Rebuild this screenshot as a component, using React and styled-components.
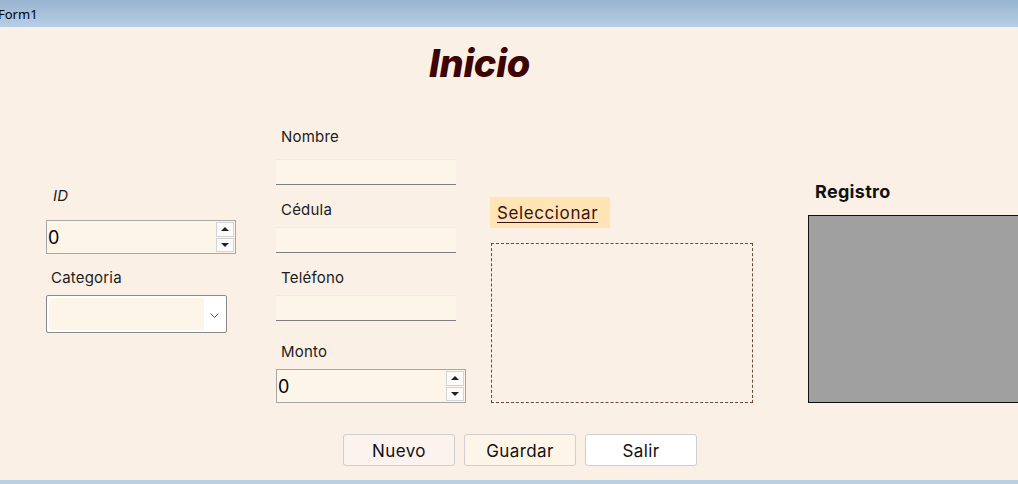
import React from 'react';
import styled, { createGlobalStyle } from 'styled-components';

const GlobalStyle = createGlobalStyle`
    html, body {
        margin: 0;
        padding: 0;
        background: #faf0e6;
        font-family: "Inter", "Noto Sans", sans-serif;
        overflow: hidden;
    }
`

const Window = styled.div`
    width: 1018px;
    height: 484px;
    display: flex;
    flex-direction: column;
    overflow: hidden;
`

const TitleBar = styled.div`
    height: 27px;
    flex-shrink: 0;
    background: linear-gradient(#99b4d1, #b6cfe7);
    display: flex;
    align-items: center;
    font-family: "Noto Sans", "Liberation Sans", sans-serif;
    font-size: 13px;
    color: #000;
    padding-left: 0;
    margin-left: -2px;
`

const Form = styled.div`
    height: 453px;
    flex-shrink: 0;
    background: #faf0e6;
    display: flex;
    flex-direction: column;
    overflow: hidden;
`

const BottomStrip = styled.div`
    flex: 1;
    background: #b9cfe4;
`

const Header = styled.div`
    padding: 15px 0 36px 429px;
`

const Title = styled.h1`
    margin: 0;
    height: 42px;
    line-height: 42px;
    font-size: 38px;
    font-weight: 800;
    font-style: italic;
    color: #3d0303;
    letter-spacing: -0.3px;
`

const Columns = styled.div`
    display: flex;
    align-items: flex-start;
`

const Column = styled.div`
    display: flex;
    flex-direction: column;
    width: ${(p) => p.width}px;
    margin-left: ${(p) => p.left}px;
    padding-top: ${(p) => p.top}px;
    flex-shrink: 0;
`

const Label = styled.div`
    height: 20px;
    line-height: 20px;
    font-size: 15px;
    color: #1c1c1c;
    padding-left: ${(p) => p.indent || 5}px;
    margin-top: ${(p) => p.gap || 0}px;
    font-style: ${(p) => p.italic ? 'italic' : 'normal'};
    letter-spacing: 0.2px;
`

const SpinBox = styled.div`
    display: flex;
    align-items: stretch;
    height: 34px;
    box-sizing: border-box;
    border: 1px solid #a7a7a7;
    background: #fdf5e8;
    margin-top: ${(p) => p.gap || 0}px;
`

const SpinValue = styled.div`
    flex: 1;
    display: flex;
    align-items: center;
    padding-left: 1px;
    font-size: 18px;
    color: #000;
`

const SpinButtons = styled.div`
    width: 18px;
    display: flex;
    flex-direction: column;
    gap: 1px;
    padding: 1px 1px 1px 0;
`

const SpinButton = styled.div`
    flex: 1;
    background: #fbfbfb;
    border: 1px solid #d4d4d4;
    display: flex;
    align-items: center;
    justify-content: center;

    &::after {
        content: '';
        width: 0;
        height: 0;
        border-left: 4px solid transparent;
        border-right: 4px solid transparent;
        ${(p) => p.down ? 'border-top: 4px solid #222;' : 'border-bottom: 4px solid #222;'}
    }
`

const Combo = styled.div`
    width: 181px;
    height: 38px;
    box-sizing: border-box;
    border: 1px solid #8a8a8a;
    border-radius: 2px;
    background: #fff;
    display: flex;
    align-items: stretch;
    padding: 2px;
    margin-top: ${(p) => p.gap || 0}px;
`

const ComboField = styled.div`
    width: 155px;
    background: #fdf5e8;
`

const ComboArrow = styled.div`
    flex: 1;
    display: flex;
    align-items: center;
    justify-content: center;
    padding-top: 2px;
`

const TextBox = styled.div`
    width: 180px;
    height: 26px;
    box-sizing: border-box;
    background: #fdf5e8;
    border-top: 1px solid #f3ebe2;
    border-bottom: 1px solid #7d7d7d;
    margin-top: ${(p) => p.gap || 0}px;
`

const SelectLink = styled.div`
    width: 120px;
    height: 31px;
    background: #ffe4b5;
    display: flex;
    align-items: center;
    padding-left: 7px;
    box-sizing: border-box;
    font-size: 17px;
    letter-spacing: 0.6px;
    color: #3b1212;
    text-decoration: underline;
    text-underline-offset: 3px;
    text-decoration-thickness: 1px;
`

const PictureFrame = styled.div`
    width: 262px;
    height: 160px;
    margin-left: 1px;
    margin-top: 15px;
    box-sizing: border-box;
    border: 1px dashed #6b4a35;
`

const SectionTitle = styled.div`
    height: 20px;
    line-height: 20px;
    font-size: 18px;
    font-weight: 700;
    color: #111;
    padding-left: 7px;
    letter-spacing: 0.3px;
`

const GridBox = styled.div`
    width: 230px;
    height: 188px;
    margin-top: 13px;
    box-sizing: border-box;
    background: #a0a0a0;
    border: 1px solid #111;
`

const ButtonRow = styled.div`
    display: flex;
    gap: 9px;
    margin: 31px 0 0 343px;
`

const Button = styled.button`
    width: 112px;
    height: 32px;
    box-sizing: border-box;
    border: 1px solid #cfcfcf;
    border-radius: 3px;
    background: ${(p) => p.bg};
    font-family: "Inter", "Noto Sans", sans-serif;
    font-size: 17px;
    letter-spacing: 0.4px;
    color: #111;
    padding: 0;
    padding-top: 2px;
`

const Spinner = ({ gap }) => (
    <SpinBox gap={gap}>
        <SpinValue>0</SpinValue>
        <SpinButtons>
            <SpinButton />
            <SpinButton down />
        </SpinButtons>
    </SpinBox>
)

export default function App() {
    return (
        <Window>
            <GlobalStyle />
            <TitleBar>Form1</TitleBar>
            <Form>
                <Header>
                    <Title>Inicio</Title>
                </Header>
                <Columns>
                    <Column left={46} width={190} top={66}>
                        <Label italic indent={7}>ID</Label>
                        <Spinner gap={14} />
                        <Label gap={14}>Categoria</Label>
                        <Combo gap={7}>
                            <ComboField />
                            <ComboArrow>
                                <svg width="9" height="5" viewBox="0 0 9 5">
                                    <path d="M0.5 0.5 L4.5 4.5 L8.5 0.5" fill="none" stroke="#555" strokeWidth="1" />
                                </svg>
                            </ComboArrow>
                        </Combo>
                    </Column>
                    <Column left={40} width={190} top={7}>
                        <Label>Nombre</Label>
                        <TextBox gap={12} />
                        <Label gap={15}>Cédula</Label>
                        <TextBox gap={7} />
                        <Label gap={15}>Teléfono</Label>
                        <TextBox gap={7} />
                        <Label gap={21}>Monto</Label>
                        <Spinner gap={7} />
                    </Column>
                    <Column left={24} width={264} top={77}>
                        <SelectLink>Seleccionar</SelectLink>
                        <PictureFrame />
                    </Column>
                    <Column left={54} width={230} top={62}>
                        <SectionTitle>Registro</SectionTitle>
                        <GridBox />
                    </Column>
                </Columns>
                <ButtonRow>
                    <Button bg="#fdf3ee">Nuevo</Button>
                    <Button bg="#fdf6e8">Guardar</Button>
                    <Button bg="#ffffff">Salir</Button>
                </ButtonRow>
            </Form>
            <BottomStrip />
        </Window>
    );
}
